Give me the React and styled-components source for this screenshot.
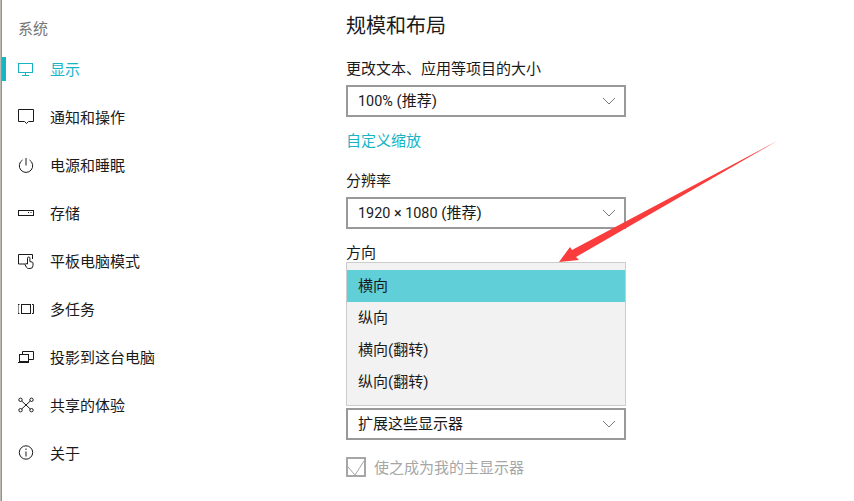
import React from 'react';
import styled, { createGlobalStyle } from 'styled-components';

const GlobalStyle = createGlobalStyle`
    html, body {
        margin: 0;
        padding: 0;
        background: #fff;
    }
    body {
        font-family: Roboto, "Noto Sans CJK SC", sans-serif;
        color: #1a1a1a;
    }
`;

const navItems = [
    { label: '显示', icon: 'display', active: true },
    { label: '通知和操作', icon: 'notify' },
    { label: '电源和睡眠', icon: 'power' },
    { label: '存储', icon: 'storage' },
    { label: '平板电脑模式', icon: 'tablet' },
    { label: '多任务', icon: 'tasks' },
    { label: '投影到这台电脑', icon: 'project' },
    { label: '共享的体验', icon: 'share' },
    { label: '关于', icon: 'info' },
];

const iconShapes = {
    display: (
        <>
            <rect x="1.5" y="2.5" width="14" height="9" />
            <path d="M8.5 11.5v2.5M5 14.5h7" />
        </>
    ),
    notify: <path d="M1.5 .5h15v12h-5l-2 2-2-2h-6z" />,
    power: (
        <>
            <path d="M5.5 3a6.7 6.7 0 1 0 7 0" />
            <path d="M9 1v7.5" />
        </>
    ),
    storage: (
        <>
            <rect x="1.5" y="5.5" width="15" height="5" />
            <path d="M11 7.5h1M13.5 7.5h1" />
        </>
    ),
    tablet: (
        <>
            <path d="M8.5 11H1.5V1.5H15.5V6" />
            <path d="M10.5 11V5.2a1.2 1.2 0 0 1 2.4 0v3.4l2.3.5a1 1 0 0 1 .8 1v2.4a3 3 0 0 1-3 3h-1.2a3 3 0 0 1-2.5-1.4L8 11.5l.9-.9z" />
        </>
    ),
    tasks: (
        <>
            <rect x="4.5" y="3.5" width="9" height="9" />
            <path d="M2.5 3.5h-1.5v9h1.5M15 3.5h1.5v9h-1.5" />
        </>
    ),
    project: (
        <>
            <path d="M5.5 5.5v-3h11v8h-5" />
            <rect x="2.5" y="5.5" width="9" height="7" />
            <path d="M1 13.5h11" />
        </>
    ),
    share: (
        <>
            <circle cx="3.5" cy="2.8" r="1.7" />
            <circle cx="14.5" cy="2.8" r="1.7" />
            <circle cx="3.5" cy="13.2" r="1.7" />
            <circle cx="14.5" cy="13.2" r="1.7" />
            <path d="M4.7 4L9 8l4.3-4M4.7 12L9 8l4.3 4" />
        </>
    ),
    info: (
        <>
            <circle cx="9" cy="7.5" r="6.7" />
            <path d="M9 6.5v5M9 3.5v1.5" />
        </>
    ),
};

const NavIcon = ({ name }) => (
    <IconSvg viewBox="1 0 18 16" fill="none" stroke="currentColor" strokeWidth="1">
        {iconShapes[name]}
    </IconSvg>
);

const Chevron = () => (
    <ChevronSvg viewBox="0 0 14 8" fill="none" stroke="#7a7a7a" strokeWidth="1">
        <path d="M1 1l6 6 6-6" />
    </ChevronSvg>
);

const Select = ({ children }) => (
    <SelectBox>
        <SelectText>{children}</SelectText>
        <Chevron />
    </SelectBox>
);

const App = () => (
    <Page>
        <GlobalStyle />
        <Sidebar>
            <SidebarTitle>系统</SidebarTitle>
            {navItems.map((item) => (
                <NavRow key={item.label} $active={item.active}>
                    <NavIcon name={item.icon} />
                    <NavLabel>{item.label}</NavLabel>
                </NavRow>
            ))}
        </Sidebar>
        <Content>
            <Title>规模和布局</Title>
            <Label>更改文本、应用等项目的大小</Label>
            <Select><Numeric>100%</Numeric> (推荐)</Select>
            <Link>自定义缩放</Link>
            <Label $top={16}>分辨率</Label>
            <Select><Numeric>1920 × 1080</Numeric> (推荐)</Select>
            <Label $top={11}>方向</Label>
            <Popup>
                <PopupItem $selected>横向</PopupItem>
                <PopupItem>纵向</PopupItem>
                <PopupItem>横向(翻转)</PopupItem>
                <PopupItem>纵向(翻转)</PopupItem>
            </Popup>
            <Select>扩展这些显示器</Select>
            <CheckRow>
                <CheckBox viewBox="0 0 20 20" fill="none">
                    <rect x="1" y="1" width="18" height="18" stroke="#a6a6a6" strokeWidth="2" />
                    <path d="M2 10l7 8 9-14" stroke="#a6a6a6" strokeWidth="1" />
                </CheckBox>
                <span>使之成为我的主显示器</span>
            </CheckRow>
        </Content>
        <Arrow viewBox="0 0 854 501">
            <path fill="#fb3c3c" d="M559 262L570 247L572 250L777 141L576 257L579 260Z" />
        </Arrow>
    </Page>
);

export default App;

const Page = styled.div`
    position: relative;
    display: flex;
    width: 854px;
    height: 501px;
    overflow: hidden;
    background: #fff;
`;

const Sidebar = styled.nav`
    width: 346px;
    flex-shrink: 0;
    box-sizing: border-box;
    padding: 17px 0 0 1px;
    border-left: 1px solid #bdb8b0;
    box-shadow: inset 1px 0 0 #3fb2c4;
`;

const SidebarTitle = styled.div`
    height: 24px;
    margin-bottom: 16px;
    padding-left: 16px;
    font-size: 15px;
    line-height: 24px;
    color: #767676;
`;

const NavRow = styled.div`
    display: flex;
    align-items: center;
    gap: 14px;
    height: 24px;
    margin-bottom: 24px;
    padding-left: 16px;
    font-size: 15px;
    line-height: 24px;
    color: ${(p) => (p.$active ? '#17b4c6' : '#1a1a1a')};
    box-shadow: ${(p) => (p.$active ? 'inset 4px 0 0 #17b4c6' : 'none')};
`;

const NavLabel = styled.span`
    margin-top: 2px;
`;

const IconSvg = styled.svg`
    width: 18px;
    height: 16px;
    flex-shrink: 0;
`;

const Content = styled.main`
    display: flex;
    flex-direction: column;
    width: 280px;
    padding-top: 12px;
`;

const Title = styled.h1`
    margin: 0 0 16px;
    font-size: 20px;
    font-weight: 400;
    line-height: 28px;
`;

const Label = styled.div`
    margin-top: ${(p) => p.$top || 0}px;
    margin-bottom: 3px;
    font-size: 15px;
    line-height: 26px;
`;

const SelectBox = styled.div`
    display: flex;
    align-items: center;
    justify-content: space-between;
    box-sizing: border-box;
    height: 32px;
    padding: 0 8px 0 10px;
    border: 2px solid #999;
    background: #fff;
`;

const SelectText = styled.span`
    font-size: 15px;
    line-height: 24px;
`;

const Numeric = styled.span`
    font-size: 14.4px;
`;

const ChevronSvg = styled.svg`
    width: 14px;
    height: 8px;
`;

const Link = styled.div`
    margin: 11px 0 -2px;
    font-size: 15px;
    line-height: 26px;
    color: #17b4c6;
`;

const Popup = styled.div`
    box-sizing: border-box;
    height: 144px;
    margin: -7px 0 2px;
    padding: 7px 0;
    border: 1px solid #ccc;
    background: #f2f2f2;
`;

const PopupItem = styled.div`
    height: 32px;
    padding-left: 11px;
    font-size: 15px;
    line-height: 32px;
    background: ${(p) => (p.$selected ? '#60cfd8' : 'transparent')};
`;

const CheckRow = styled.div`
    display: flex;
    align-items: center;
    gap: 8px;
    margin-top: 16px;
    font-size: 15px;
    color: #a6a6a6;
`;

const CheckBox = styled.svg`
    width: 20px;
    height: 20px;
`;

const Arrow = styled.svg`
    position: absolute;
    inset: 0;
    width: 854px;
    height: 501px;
    pointer-events: none;
`;
